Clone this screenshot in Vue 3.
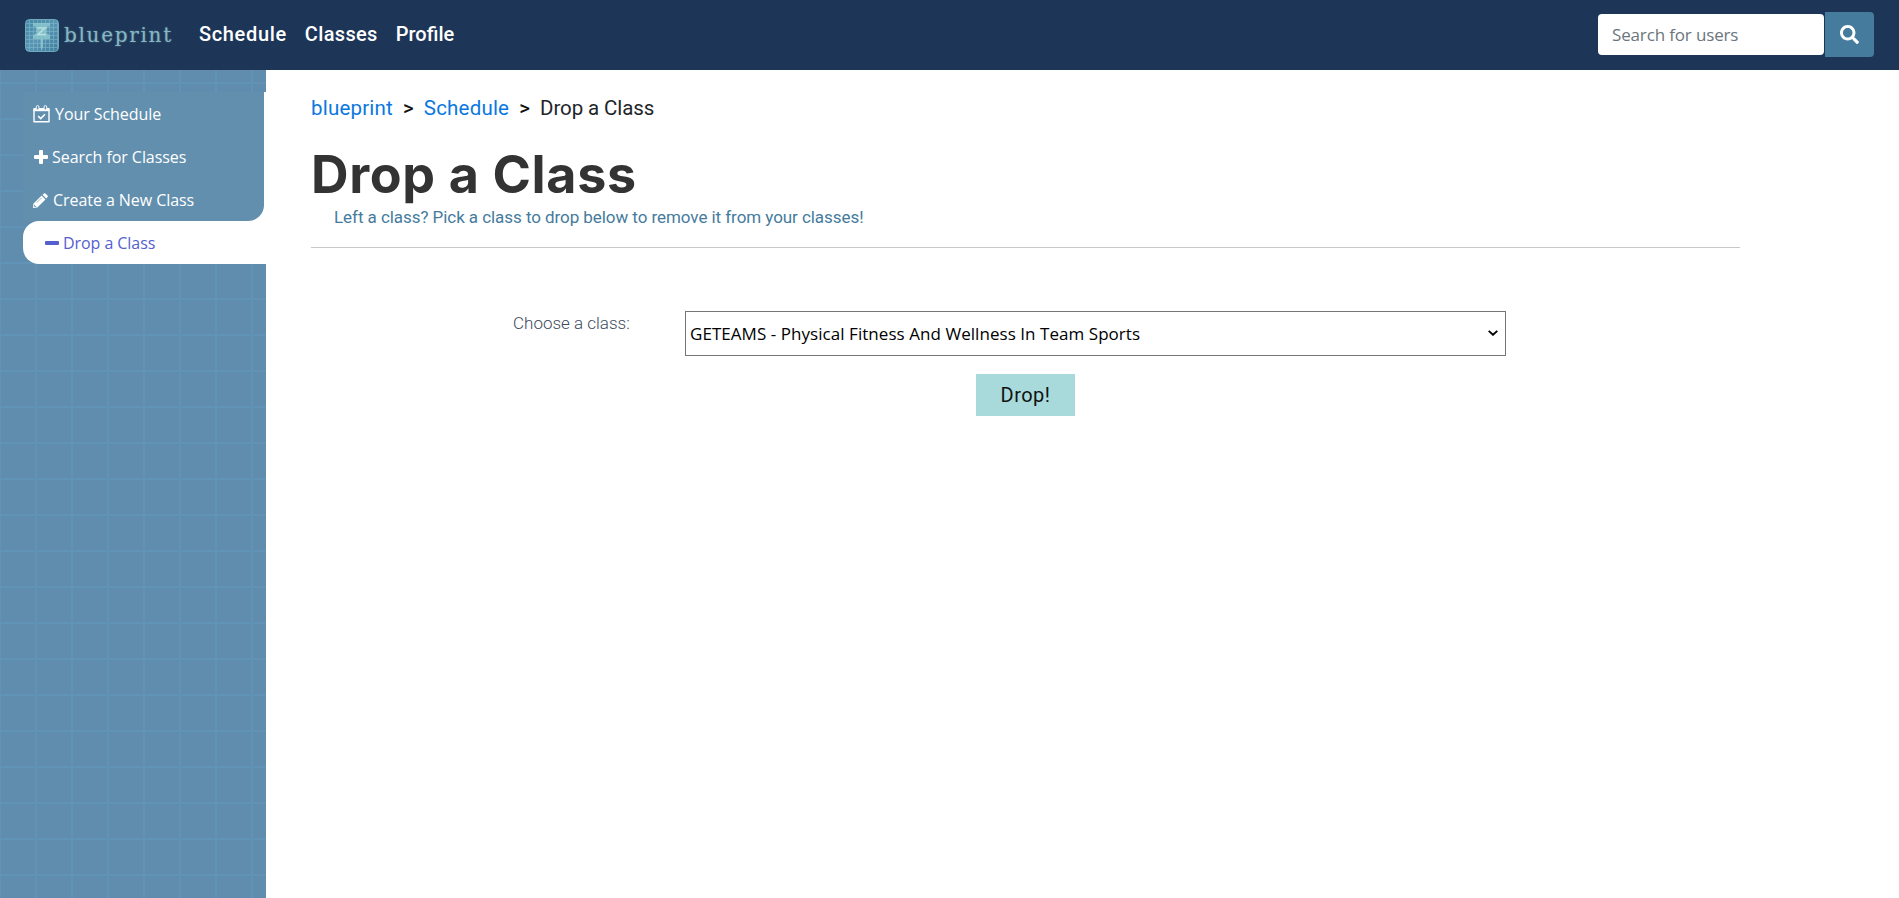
<script setup>
import { ref } from 'vue'

const navLinks = ['Schedule', 'Classes', 'Profile']
const sideLinks = [
  { icon: 'calendar', label: 'Your Schedule' },
  { icon: 'plus', label: 'Search for Classes' },
  { icon: 'pencil', label: 'Create a New Class' },
]
const classes = ['GETEAMS - Physical Fitness And Wellness In Team Sports']
const selected = ref(classes[0])
</script>

<template>
  <div class="page">
    <header class="navbar">
      <a class="brand">
        <svg class="logo" viewBox="0 0 34 33" width="34" height="33">
          <defs>
            <linearGradient id="tile" x1="0" y1="0" x2="1" y2="1">
              <stop offset="0" stop-color="#4689a8" />
              <stop offset="0.5" stop-color="#5795b4" />
              <stop offset="1" stop-color="#3f7c9f" />
            </linearGradient>
            <pattern id="cells" width="4" height="4" patternUnits="userSpaceOnUse">
              <path d="M0 .5H4M.5 0V4" stroke="#8fc3cf" stroke-width="0.8" opacity="0.6" />
            </pattern>
          </defs>
          <rect x="0.5" y="0.5" width="33" height="32" rx="4" fill="url(#tile)" stroke="#70a9bb" />
          <rect x="1" y="1" width="32" height="31" rx="4" fill="url(#cells)" />
          <path d="M8 4H25V7.500H22.500L21.500 14L25 16.500V20H18V28L16.700 31L15.500 28V20H8V16.500L11.500 14L10.500 7.500H8Z" fill="#93cbd2" opacity="0.75" />
          <path d="M12.500 9H20L13 15.500H21" fill="none" stroke="#b5dfe0" stroke-width="1.600" />
        </svg>
        <span class="brand-name">blueprint</span>
      </a>
      <nav class="nav-links">
        <a v-for="link in navLinks" :key="link">{{ link }}</a>
      </nav>
      <form class="search" @submit.prevent>
        <input type="text" placeholder="Search for users" />
        <button type="submit" aria-label="Search">
          <svg viewBox="0 0 512 512" width="19" height="19">
            <path fill="#fff" d="M505 442.700L405.300 343c-4.500-4.500-10.600-7-17-7H372c27.600-35.300 44-79.700 44-128C416 93.100 322.900 0 208 0S0 93.100 0 208s93.100 208 208 208c48.300 0 92.700-16.400 128-44v16.300c0 6.400 2.500 12.500 7 17l99.700 99.700c9.400 9.400 24.600 9.400 33.900 0l28.300-28.300c9.400-9.400 9.400-24.600.1-34zM208 336c-70.700 0-128-57.200-128-128 0-70.700 57.200-128 128-128 70.700 0 128 57.200 128 128 0 70.700-57.200 128-128 128z" />
          </svg>
        </button>
      </form>
    </header>

    <div class="body">
      <aside class="sidebar">
        <div class="side-group">
          <div class="side-block">
            <a v-for="item in sideLinks" :key="item.icon" class="side-link">
              <svg v-if="item.icon === 'calendar'" class="ic-calendar" viewBox="0 0 17 18" width="17" height="18">
                <path d="M1 4.500H16V16.800H1Z" fill="none" stroke="#fff" stroke-width="1.400" stroke-linejoin="round" />
                <path d="M.5 3H16.500V6.200H.5Z" fill="#fff" />
                <rect x="3.300" y=".6" width="2.600" height="4.200" rx="1.200" fill="#628fae" stroke="#fff" />
                <rect x="11.100" y=".6" width="2.600" height="4.200" rx="1.200" fill="#628fae" stroke="#fff" />
                <path d="M5.200 11.200L7.700 13.600L12 9.200" fill="none" stroke="#fff" stroke-width="1.600" />
              </svg>
              <svg v-else-if="item.icon === 'plus'" class="ic-plus" viewBox="0 0 14 14" width="14" height="14">
                <path d="M6 0H8Q9 0 9 1V5H13Q14 5 14 6V8Q14 9 13 9H9V13Q9 14 8 14H6Q5 14 5 13V9H1Q0 9 0 8V6Q0 5 1 5H5V1Q5 0 6 0Z" fill="#fff" />
              </svg>
              <svg v-else class="ic-pencil" viewBox="0 0 15 15" width="15" height="15">
                <path d="M8.600 2.500L12.500 6.400L4.300 14.600L0 15L.4 10.700Z" fill="#fff" />
                <path d="M9.500 1.700L10.900 .5Q11.700 -.2 12.500 .5L14.500 2.500Q15.300 3.300 14.500 4.100L13.300 5.500Z" fill="#fff" />
                <path d="M3.600 9.800L8.600 4.800" stroke="#628fae" stroke-width=".6" />
                <path d="M1.500 11.800V13.500H3.200" fill="none" stroke="#628fae" stroke-width=".8" />
              </svg>
              <span>{{ item.label }}</span>
            </a>
          </div>
          <a class="side-link active">
            <svg class="ic-minus" viewBox="0 0 14 4" width="14" height="4">
              <rect width="14" height="4" rx="1" fill="#5560cf" />
            </svg>
            <span>Drop a Class</span>
          </a>
        </div>
      </aside>

      <main class="content">
        <div class="crumbs">
          <a>blueprint</a><i>&gt;</i><a>Schedule</a><i>&gt;</i><span>Drop a Class</span>
        </div>
        <h1>Drop a Class</h1>
        <p class="subtitle">Left a class? Pick a class to drop below to remove it from your classes!</p>
        <hr />
        <form class="drop-form" @submit.prevent>
          <div class="row">
            <label for="class-select">Choose a class:</label>
            <div class="select-wrap">
              <select id="class-select" v-model="selected">
                <option v-for="c in classes" :key="c" :value="c">{{ c }}</option>
              </select>
              <svg class="chevron" viewBox="0 0 10 6" width="10" height="6">
                <path d="M.7 .9L5 4.800L9.300 .9" fill="none" stroke="#000" stroke-width="1.900" />
              </svg>
            </div>
          </div>
          <button class="drop-btn" type="submit">Drop!</button>
        </form>
      </main>
    </div>
  </div>
</template>

<style>
body { margin: 0; background: #fff; }
</style>

<style scoped>
* { box-sizing: border-box; }
.page { display: flex; flex-direction: column; height: 898px; overflow: hidden; font-family: Roboto, sans-serif; }

.navbar { display: flex; align-items: flex-start; flex: none; height: 70px; padding: 0 25px; background: #1d3557; }
.brand { display: flex; align-items: center; height: 70px; width: 174px; }
.logo { flex: none; }
.brand-name { margin-left: 5px; font-family: "DejaVu Serif", serif; font-size: 20px; line-height: 30px; letter-spacing: 1.700px; color: #86b8c1; text-shadow: 0 0 2px rgba(134, 184, 193, 0.5); }
.nav-links { display: flex; gap: 18px; font-size: 20px; font-weight: 500; line-height: 68px; letter-spacing: 0.350px; color: #fff; }
.nav-links a:first-child { letter-spacing: 0.650px; }
.nav-links a:last-child { letter-spacing: 0; }
.search { display: flex; align-items: center; height: 69px; margin-left: auto; gap: 1px; }
.search input { width: 226px; height: 41px; padding: 0 14px; border: 0; border-radius: 4px; background: #fff; font: 17px "Open Sans", sans-serif; letter-spacing: -0.150px; }
.search input::placeholder { color: #6c757d; opacity: 1; }
.search button { display: flex; align-items: center; justify-content: center; width: 49px; height: 45px; padding: 0; border: 0; border-radius: 0 4px 4px 0; background: #457b9d; }

.body { display: flex; flex: 1; min-height: 0; }
.sidebar {
  flex: none;
  width: 266px;
  padding: 22px 0 0 23px;
  background-color: #608dad;
  background-image: linear-gradient(90deg, #6193b6 2px, transparent 2px), linear-gradient(#6193b6 2px, transparent 2px);
  background-size: 36px 36px;
  background-position: -1px 12px;
}
.side-group { background: linear-gradient(#fff, #fff) right top / 20px 150px no-repeat; }
.side-block { width: 241px; border-radius: 0 0 16px 0; background: #628fae; }
.side-link { display: flex; align-items: center; height: 43px; padding: 1px 0 0 10px; font: 16px/43px "Open Sans", sans-serif; letter-spacing: -0.060px; color: #fff; }
.side-link svg { flex: none; }
.ic-calendar { margin-right: 5px; }
.ic-plus { margin: 0 4px 0 1px; }
.ic-pencil { margin: 0 5px 0 0; }
.side-link.active { padding-left: 22px; border-radius: 16px 0 0 16px; background: #fff; color: #5560cf; }
.ic-minus { margin-right: 4px; }

.content { flex: 1; padding: 24px 159px 0 45px; }
.crumbs { display: flex; line-height: 28px; font-size: 20.500px; letter-spacing: 0.200px; color: #212529; }
.crumbs a { color: #0a78e0; }
.crumbs span { letter-spacing: -0.100px; }
.crumbs i { margin: 0 10px; font-style: normal; font-weight: 500; color: #111; }
h1 { margin: 23px 0 0; font: 700 52px/60px Inter, sans-serif; letter-spacing: 0.650px; color: #333; }
.subtitle { margin: 0 0 0 23px; font-size: 17px; line-height: 24px; letter-spacing: -0.060px; color: #457b9d; }
hr { height: 1px; margin: 18px 0 0; border: 0; background: #c8c8c8; }
.drop-form { display: flex; flex-direction: column; align-items: flex-start; padding: 63px 0 0 201px; }
.row { display: flex; align-items: flex-start; }
label { width: 173px; padding-left: 1px; font-size: 17px; font-weight: 300; line-height: 24px; color: #3d4a5c; }
.select-wrap { position: relative; width: 821px; height: 45px; }
select { width: 100%; height: 100%; padding: 0 24px 0 4px; appearance: none; border: 1px solid #767676; border-radius: 0; background-color: #fff; font: 17px "Open Sans", sans-serif; letter-spacing: 0.050px; color: #000; }
.chevron { position: absolute; top: 19px; right: 8px; pointer-events: none; }
.drop-btn { width: 99px; height: 42px; margin: 18px 0 0 464px; padding: 0; border: 0; background: #a8dadc; font: 20px Roboto, sans-serif; letter-spacing: 0.500px; color: #111; }
</style>
